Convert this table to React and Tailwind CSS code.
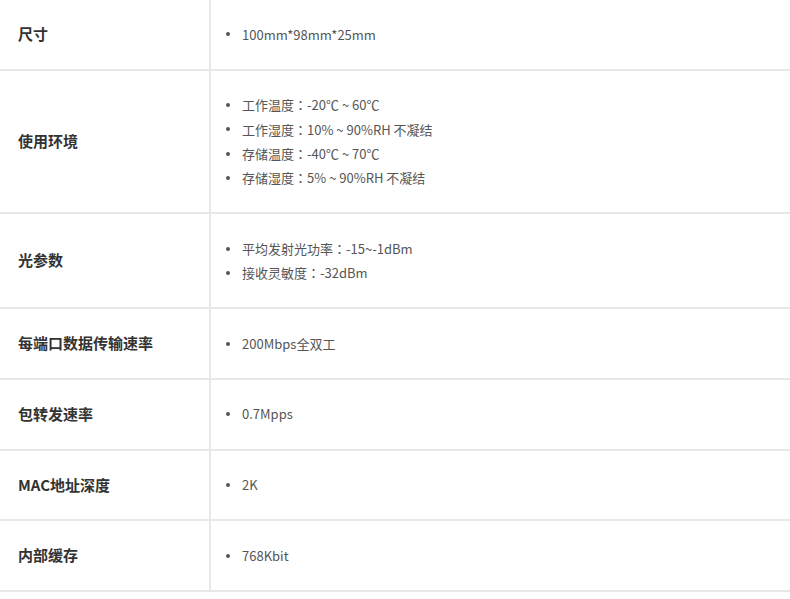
import React from "react";

const rows = [
  { label: "尺寸", items: ["100mm*98mm*25mm"] },
  {
    label: "使用环境",
    items: [
      "工作温度：-20℃ ~ 60℃",
      "工作湿度：10% ~ 90%RH 不凝结",
      "存储温度：-40℃ ~ 70℃",
      "存储湿度：5% ~ 90%RH 不凝结",
    ],
  },
  { label: "光参数", items: ["平均发射光功率：-15~-1dBm", "接收灵敏度：-32dBm"] },
  { label: "每端口数据传输速率", items: ["200Mbps全双工"] },
  { label: "包转发速率", items: ["0.7Mpps"] },
  { label: "MAC地址深度", items: ["2K"] },
  { label: "内部缓存", items: ["768Kbit"] },
];

function Text({ t }) {
  const parts = t.split("：");
  if (parts.length === 1) return <span>{t}</span>;
  return (
    <span>
      {parts[0]}
      <span style={{ fontFamily: '"Noto Sans CJK TC", sans-serif' }}>：</span>
      {parts[1]}
    </span>
  );
}

export default function App() {
  return (
    <div
      className="w-[790px] h-[599px] bg-white overflow-hidden"
      style={{ fontFamily: '"Noto Sans CJK SC", "Noto Sans", sans-serif' }}
    >
      {rows.map((r, i) => (
        <div key={i} className="flex border-b-2 border-[#e8e8e8]">
          <div className="w-[211px] shrink-0 border-r-2 border-[#e8e8e8] flex items-center pl-[18px] text-[15px] font-bold text-[#333]">
            {r.label}
          </div>
          <div className="flex-1 py-[22.2px] pl-[15px]">
            {r.items.map((t, j) => (
              <div key={j} className="flex items-center h-[24.3px] text-[13px] text-[#555]">
                <span className="w-[4px] h-[4px] rounded-full bg-[#555] mr-[12px] shrink-0" />
                <Text t={t} />
              </div>
            ))}
          </div>
        </div>
      ))}
    </div>
  );
}
